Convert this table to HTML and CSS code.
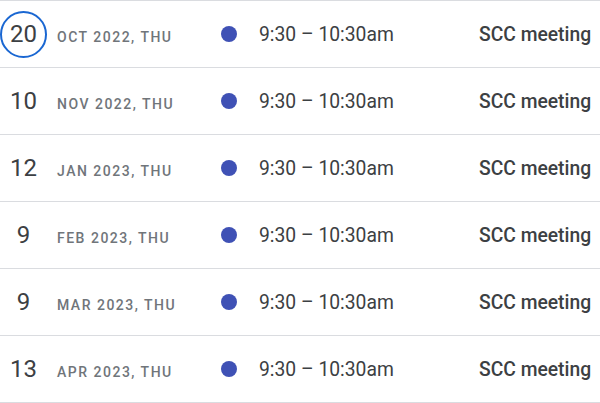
FILE: index.html
```html
<!DOCTYPE html>
<html>
<head>
<meta charset="utf-8">
<link rel="stylesheet" href="styles.css">
</head>
<body>
<div class="agenda">
  <div class="row">
    <div class="day"><span class="num today">20</span></div>
    <div class="date">Oct 2022, Thu</div>
    <div class="dotcol"><span class="dot"></span></div>
    <div class="time">9:30 – 10:30am</div>
    <div class="title">SCC meeting</div>
  </div>
  <div class="row">
    <div class="day"><span class="num">10</span></div>
    <div class="date">Nov 2022, Thu</div>
    <div class="dotcol"><span class="dot"></span></div>
    <div class="time">9:30 – 10:30am</div>
    <div class="title">SCC meeting</div>
  </div>
  <div class="row">
    <div class="day"><span class="num">12</span></div>
    <div class="date">Jan 2023, Thu</div>
    <div class="dotcol"><span class="dot"></span></div>
    <div class="time">9:30 – 10:30am</div>
    <div class="title">SCC meeting</div>
  </div>
  <div class="row">
    <div class="day"><span class="num">9</span></div>
    <div class="date">Feb 2023, Thu</div>
    <div class="dotcol"><span class="dot"></span></div>
    <div class="time">9:30 – 10:30am</div>
    <div class="title">SCC meeting</div>
  </div>
  <div class="row">
    <div class="day"><span class="num">9</span></div>
    <div class="date">Mar 2023, Thu</div>
    <div class="dotcol"><span class="dot"></span></div>
    <div class="time">9:30 – 10:30am</div>
    <div class="title">SCC meeting</div>
  </div>
  <div class="row">
    <div class="day"><span class="num">13</span></div>
    <div class="date">Apr 2023, Thu</div>
    <div class="dotcol"><span class="dot"></span></div>
    <div class="time">9:30 – 10:30am</div>
    <div class="title">SCC meeting</div>
  </div>
</div>
</body>
</html>
```
FILE: styles.css
```css
html, body {
  margin: 0;
  padding: 0;
  background: #fff;
}
body {
  font-family: Roboto, "Liberation Sans", sans-serif;
  color: #3c4043;
  width: 600px;
  overflow: hidden;
}
.agenda {
  border-top: 1px solid #dadce0;
}
.row {
  display: flex;
  align-items: center;
  height: 66px;
  border-bottom: 1px solid #dadce0;
}
.day {
  width: 47px;
  display: flex;
  justify-content: center;
  align-items: center;
}
.num {
  display: flex;
  align-items: center;
  justify-content: center;
  width: 47px;
  height: 47px;
  box-sizing: border-box;
  border-radius: 50%;
  font-size: 24px;
  line-height: 1;
  color: #3c4043;
}
.num.today {
  border: 2px solid #1a67d2;
}
.date {
  margin-left: 10px;
  width: 152px;
  font-size: 14px;
  font-weight: 500;
  letter-spacing: 1.5px;
  text-transform: uppercase;
  color: #70757a;
  padding-top: 6px;
}
.dotcol {
  width: 38px;
  display: flex;
  align-items: center;
  padding-left: 12px;
  box-sizing: border-box;
}
.dot {
  width: 16px;
  height: 16px;
  border-radius: 50%;
  background: #3f51b5;
}
.time {
  margin-left: 12px;
  width: 220px;
  font-size: 19.3px;
  color: #3c4043;
}
.title {
  font-size: 19.3px;
  font-weight: 500;
  color: #3c4043;
  white-space: nowrap;
}
```
